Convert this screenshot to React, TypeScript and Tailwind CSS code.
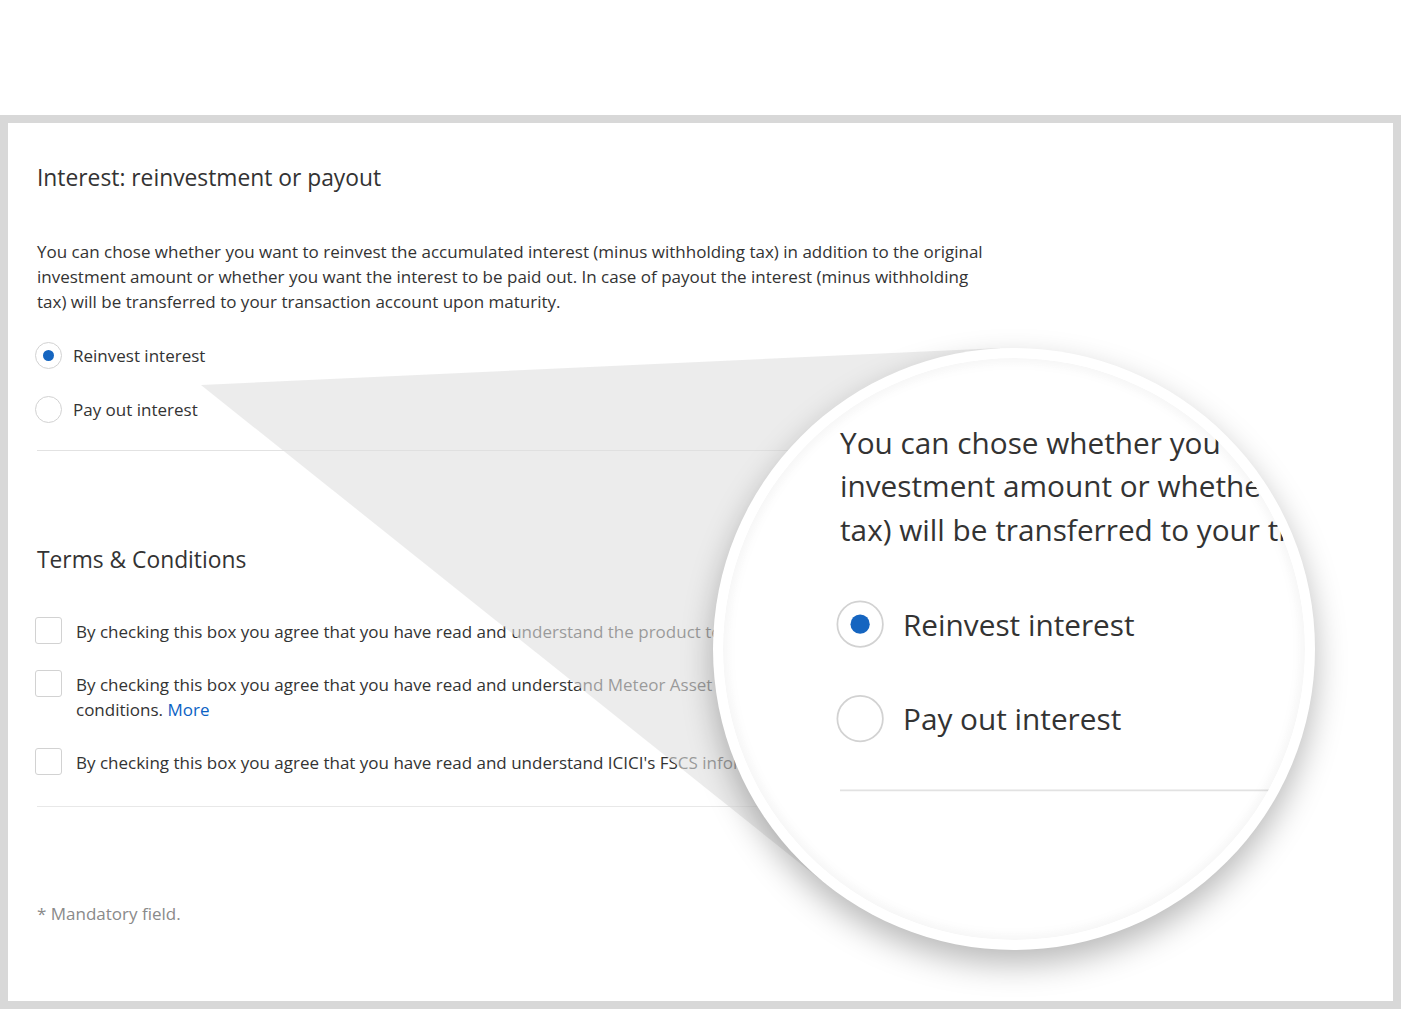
import React from "react";

function Radio({ checked, label }: { checked: boolean; label: string }) {
  return (
    <div className="flex items-center h-[27px]">
      <div className="w-[27px] h-[27px] rounded-full border border-[#d2d2d2] bg-white flex items-center justify-center">
        {checked && <div className="w-[11px] h-[11px] rounded-full bg-[#1565c0]" />}
      </div>
      <span className="ml-[11px] text-[17px] leading-[25px]">{label}</span>
    </div>
  );
}

function Check({ children }: { children: React.ReactNode }) {
  return (
    <div className="flex items-start">
      <div className="w-[27px] h-[27px] shrink-0 rounded-[3px] border border-[#d2d2d2] bg-white" />
      <div className="ml-[14px] pt-[2px] text-[17px] leading-[25px] whitespace-nowrap">{children}</div>
    </div>
  );
}

function Panel() {
  return (
    <div className="bg-white h-full px-[29px] pt-[40px] text-[#333] font-['Open_Sans',sans-serif]">
      <h2 className="text-[22.8px] leading-[30px] font-normal">Interest: reinvestment or payout</h2>
      <p className="mt-[46px] w-[962px] text-[17px] leading-[25px]">
        You can chose whether you want to reinvest the accumulated interest (minus withholding tax) in addition to the original
        investment amount or whether you want the interest to be paid out. In case of payout the interest (minus withholding
        tax) will be transferred to your transaction account upon maturity.
      </p>
      <div className="mt-[28px] ml-[-2px] flex flex-col gap-[27px]">
        <Radio checked label="Reinvest interest" />
        <Radio checked={false} label="Pay out interest" />
      </div>
      <div className="mt-[27px] h-px w-[980px] bg-[#e2e2e2]" />
      <h2 className="mt-[94px] text-[22.8px] leading-[30px] font-normal">Terms &amp; Conditions</h2>
      <div className="mt-[42px] ml-[-2px] flex flex-col gap-[26px]">
        <Check>By checking this box you agree that you have read and understand the product terms and conditions.</Check>
        <Check>
          By checking this box you agree that you have read and understand Meteor Asset Management's terms and
          <br />
          conditions. <span className="text-[#0b62c4]">More</span>
        </Check>
        <Check>By checking this box you agree that you have read and understand ICICI's FSCS information.</Check>
      </div>
      <div className="mt-[31px] h-px w-[980px] bg-[#e8e8e8]" />
      <p className="mt-[94px] text-[17px] leading-[25px] text-[#8a8a8a]">* Mandatory field.</p>
    </div>
  );
}

export default function App() {
  return (
    <div className="relative w-[1401px] h-[1009px] bg-white overflow-hidden">
      <div className="h-[115px]" />
      <div className="h-[894px] bg-[#d8d8d8] p-[8px]">
        <Panel />
      </div>

      <svg className="absolute left-0 top-0 pointer-events-none" width="1401" height="1009">
        <polygon points="201,385 1000,348 1014,649 826,884" fill="rgba(223,223,223,0.6)" />
      </svg>

      <div className="absolute left-[713px] top-[348px] w-[602px] h-[602px] rounded-full bg-white p-[10px] shadow-[0_14px_32px_rgba(0,0,0,0.28)]">
        <div className="relative w-[582px] h-[582px] rounded-full overflow-hidden bg-white">
          <div className="absolute left-0 top-0 w-[1385px] h-[878px] origin-top-left [transform:translate(66.25px,-140.75px)_scale(1.75)]">
            <Panel />
          </div>
          <div className="absolute inset-0 rounded-full bg-[radial-gradient(circle,rgba(0,0,0,0)_68%,rgba(0,0,0,0.07)_100%)] shadow-[inset_0_0_16px_rgba(0,0,0,0.06)]" />
        </div>
      </div>
    </div>
  );
}
